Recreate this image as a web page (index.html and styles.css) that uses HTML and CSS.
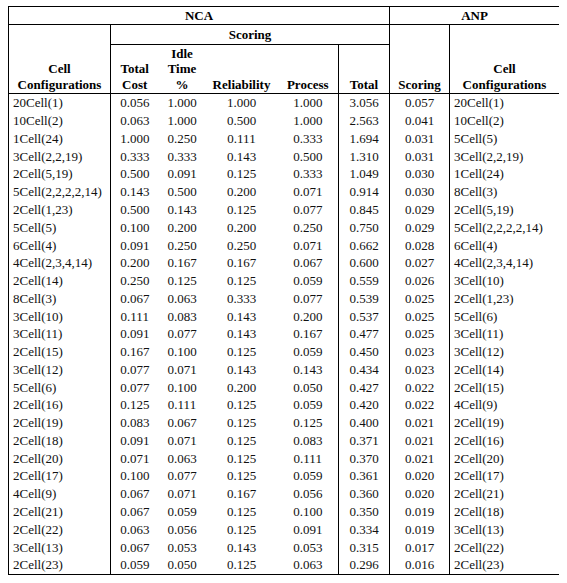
FILE: index.html
```html
<!DOCTYPE html>
<html>
<head>
<meta charset="utf-8">
<link rel="stylesheet" href="styles.css">
</head>
<body>
<table class="tbl">
<colgroup>
<col class="w1"><col class="w2"><col class="w3"><col class="w4"><col class="w5"><col class="w6"><col class="w7"><col class="w8">
</colgroup>
<thead>
<tr class="h1">
<th colspan="6" class="sep">NCA</th>
<th colspan="2">ANP</th>
</tr>
<tr class="h2">
<th rowspan="2" class="sep cfg">Cell<br>Configurations</th>
<th colspan="5" class="sep under">Scoring</th>
<th rowspan="2" class="sep">Scoring</th>
<th rowspan="2" class="cfg">Cell<br>Configurations</th>
</tr>
<tr class="h3">
<th>Total<br>Cost</th>
<th>Idle<br>Time<br>%</th>
<th>Reliability</th>
<th class="sep">Process</th>
<th class="sep">Total</th>
</tr>
</thead>
<tbody>
<tr><td>20Cell(1)</td><td>0.056</td><td>1.000</td><td>1.000</td><td>1.000</td><td>3.056</td><td>0.057</td><td>20Cell(1)</td></tr>
<tr><td>10Cell(2)</td><td>0.063</td><td>1.000</td><td>0.500</td><td>1.000</td><td>2.563</td><td>0.041</td><td>10Cell(2)</td></tr>
<tr><td>1Cell(24)</td><td>1.000</td><td>0.250</td><td>0.111</td><td>0.333</td><td>1.694</td><td>0.031</td><td>5Cell(5)</td></tr>
<tr><td>3Cell(2,2,19)</td><td>0.333</td><td>0.333</td><td>0.143</td><td>0.500</td><td>1.310</td><td>0.031</td><td>3Cell(2,2,19)</td></tr>
<tr><td>2Cell(5,19)</td><td>0.500</td><td>0.091</td><td>0.125</td><td>0.333</td><td>1.049</td><td>0.030</td><td>1Cell(24)</td></tr>
<tr><td>5Cell(2,2,2,2,14)</td><td>0.143</td><td>0.500</td><td>0.200</td><td>0.071</td><td>0.914</td><td>0.030</td><td>8Cell(3)</td></tr>
<tr><td>2Cell(1,23)</td><td>0.500</td><td>0.143</td><td>0.125</td><td>0.077</td><td>0.845</td><td>0.029</td><td>2Cell(5,19)</td></tr>
<tr><td>5Cell(5)</td><td>0.100</td><td>0.200</td><td>0.200</td><td>0.250</td><td>0.750</td><td>0.029</td><td>5Cell(2,2,2,2,14)</td></tr>
<tr><td>6Cell(4)</td><td>0.091</td><td>0.250</td><td>0.250</td><td>0.071</td><td>0.662</td><td>0.028</td><td>6Cell(4)</td></tr>
<tr><td>4Cell(2,3,4,14)</td><td>0.200</td><td>0.167</td><td>0.167</td><td>0.067</td><td>0.600</td><td>0.027</td><td>4Cell(2,3,4,14)</td></tr>
<tr><td>2Cell(14)</td><td>0.250</td><td>0.125</td><td>0.125</td><td>0.059</td><td>0.559</td><td>0.026</td><td>3Cell(10)</td></tr>
<tr><td>8Cell(3)</td><td>0.067</td><td>0.063</td><td>0.333</td><td>0.077</td><td>0.539</td><td>0.025</td><td>2Cell(1,23)</td></tr>
<tr><td>3Cell(10)</td><td>0.111</td><td>0.083</td><td>0.143</td><td>0.200</td><td>0.537</td><td>0.025</td><td>5Cell(6)</td></tr>
<tr><td>3Cell(11)</td><td>0.091</td><td>0.077</td><td>0.143</td><td>0.167</td><td>0.477</td><td>0.025</td><td>3Cell(11)</td></tr>
<tr><td>2Cell(15)</td><td>0.167</td><td>0.100</td><td>0.125</td><td>0.059</td><td>0.450</td><td>0.023</td><td>3Cell(12)</td></tr>
<tr><td>3Cell(12)</td><td>0.077</td><td>0.071</td><td>0.143</td><td>0.143</td><td>0.434</td><td>0.023</td><td>2Cell(14)</td></tr>
<tr><td>5Cell(6)</td><td>0.077</td><td>0.100</td><td>0.200</td><td>0.050</td><td>0.427</td><td>0.022</td><td>2Cell(15)</td></tr>
<tr><td>2Cell(16)</td><td>0.125</td><td>0.111</td><td>0.125</td><td>0.059</td><td>0.420</td><td>0.022</td><td>4Cell(9)</td></tr>
<tr><td>2Cell(19)</td><td>0.083</td><td>0.067</td><td>0.125</td><td>0.125</td><td>0.400</td><td>0.021</td><td>2Cell(19)</td></tr>
<tr><td>2Cell(18)</td><td>0.091</td><td>0.071</td><td>0.125</td><td>0.083</td><td>0.371</td><td>0.021</td><td>2Cell(16)</td></tr>
<tr><td>2Cell(20)</td><td>0.071</td><td>0.063</td><td>0.125</td><td>0.111</td><td>0.370</td><td>0.021</td><td>2Cell(20)</td></tr>
<tr><td>2Cell(17)</td><td>0.100</td><td>0.077</td><td>0.125</td><td>0.059</td><td>0.361</td><td>0.020</td><td>2Cell(17)</td></tr>
<tr><td>4Cell(9)</td><td>0.067</td><td>0.071</td><td>0.167</td><td>0.056</td><td>0.360</td><td>0.020</td><td>2Cell(21)</td></tr>
<tr><td>2Cell(21)</td><td>0.067</td><td>0.059</td><td>0.125</td><td>0.100</td><td>0.350</td><td>0.019</td><td>2Cell(18)</td></tr>
<tr><td>2Cell(22)</td><td>0.063</td><td>0.056</td><td>0.125</td><td>0.091</td><td>0.334</td><td>0.019</td><td>3Cell(13)</td></tr>
<tr><td>3Cell(13)</td><td>0.067</td><td>0.053</td><td>0.143</td><td>0.053</td><td>0.315</td><td>0.017</td><td>2Cell(22)</td></tr>
<tr><td>2Cell(23)</td><td>0.059</td><td>0.050</td><td>0.125</td><td>0.063</td><td>0.296</td><td>0.016</td><td>2Cell(23)</td></tr>
</tbody>
</table>
</body>
</html>
```
FILE: styles.css
```css
html, body { background: #fff; }
body {
  margin: 6px 8px;
  font-family: "Liberation Serif", "Tinos", "Times New Roman", "DejaVu Serif", serif;
  font-size: 13px;
  color: #111;
}
.tbl {
  border-collapse: collapse;
  table-layout: fixed;
  width: 551px;
  border: 1px solid #000;
  font-family: "Liberation Serif", "Tinos", "Times New Roman", "DejaVu Serif", serif;
}
.w1 { width: 102px; }
.w2 { width: 48px; }
.w3 { width: 47px; }
.w4 { width: 72px; }
.w5 { width: 61px; }
.w6 { width: 51px; }
.w7 { width: 60px; }
.w8 { width: 110px; }
th {
  font-family: "Liberation Serif", "Tinos", "Times New Roman", "DejaVu Serif", serif;
  font-weight: bold;
  text-align: center;
  vertical-align: bottom;
  padding: 0 0 1px 0;
  line-height: 15.5px;
  color: #000;
}
.sep { border-right: 1px solid #000; }
.under { border-bottom: 1px solid #000; }
.h1 th { height: 17px; border-bottom: 1px solid #000; vertical-align: middle; padding: 0; }
.h2 th { height: 19px; vertical-align: middle; padding: 0; }
.h2 th.cfg, .h2 th[rowspan] { vertical-align: bottom; padding-bottom: 1px; }
.h3 th { height: 47px; }
thead { border-bottom: 1px solid #000; }
td {
  font-family: "Liberation Serif", "Tinos", "Times New Roman", "DejaVu Serif", serif;
  padding: 0;
  height: 17.78px;
  line-height: 15px;
  text-align: center;
  vertical-align: middle;
  white-space: nowrap;
}
td:nth-child(1), td:nth-child(8) { text-align: left; padding-left: 4px; }
td:nth-child(1), td:nth-child(5), td:nth-child(6), td:nth-child(7) { border-right: 1px solid #000; }
```
